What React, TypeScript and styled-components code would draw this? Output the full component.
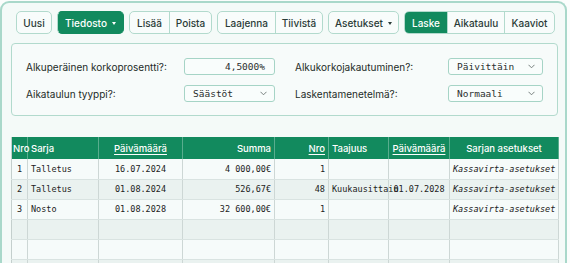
import React from 'react';
import styled, { createGlobalStyle, css } from 'styled-components';

const GREEN = '#128a5e';
const LINE = '#b2dacd';
const MONO = '"DejaVu Sans Mono", "Liberation Mono", monospace';

const GlobalStyle = createGlobalStyle`
  html, body {
    margin: 0;
    padding: 0;
    background: #fbfdfc;
    font-family: Inter, "Noto Sans", sans-serif;
    color: #1d2b28;
  }
`;

const Frame = styled.div`
  box-sizing: border-box;
  width: 567px;
  margin-top: 1px;
  min-height: 280px;
  border: 2px solid #a9d8ca;
  border-bottom: none;
  border-radius: 9px 9px 0 0;
  background: #f4faf8;
  padding: 8px 7px 0 9px;
`;

const Toolbar = styled.div`
  display: flex;
  gap: 5px;
  height: 23px;
  margin-left: 5px;
`;

const Group = styled.div`
  display: flex;
  border: 1px solid ${LINE};
  border-radius: 5px;
  background: #f8fcfb;
  overflow: hidden;
`;

const Button = styled.button<{ $active?: boolean; $w: number }>`
  box-sizing: border-box;
  display: flex;
  align-items: center;
  justify-content: center;
  gap: 5px;
  width: ${(p) => p.$w}px;
  height: 100%;
  padding: 0;
  border: none;
  background: transparent;
  font-family: Inter, sans-serif;
  font-size: 10px;
  font-weight: 500;
  color: #2a3b37;
  white-space: nowrap;
  & + & {
    border-left: 1px solid ${LINE};
  }
  ${(p) =>
    p.$active &&
    css`
      background: ${GREEN};
      color: #fff;
    `}
`;

const SoloButton = styled(Button)<{ $filled?: boolean }>`
  border: 1px solid ${(p) => (p.$filled ? GREEN : LINE)};
  border-radius: 5px;
  background: ${(p) => (p.$filled ? GREEN : '#f8fcfb')};
  color: ${(p) => (p.$filled ? '#fff' : '#2a3b37')};
`;

const Caret = styled.span`
  width: 0;
  height: 0;
  border-left: 2.5px solid transparent;
  border-right: 2.5px solid transparent;
  border-top: 3px solid currentColor;
  margin-top: 1px;
`;

const Panel = styled.div`
  box-sizing: border-box;
  margin-top: 9px;
  width: 547px;
  height: 73px;
  border: 1px solid ${LINE};
  border-radius: 4px;
  background: #f7fbfa;
  padding: 14px 14px 0 14px;
  display: grid;
  grid-template-columns: 249px 248px;
  column-gap: 20px;
  row-gap: 10px;
  grid-auto-rows: 17px;
`;

const Field = styled.div`
  display: flex;
  align-items: center;
  justify-content: space-between;
`;

const Label = styled.span`
  font-size: 10px;
  color: #1d2b28;
`;

const Control = styled.div<{ $width: number; $right?: boolean }>`
  box-sizing: border-box;
  width: ${(p) => p.$width}px;
  height: 17px;
  border: 1px solid #a6d4c6;
  border-radius: 3px;
  background: #f9fdfc;
  display: flex;
  align-items: center;
  justify-content: ${(p) => (p.$right ? 'flex-end' : 'space-between')};
  padding: ${(p) => (p.$right ? '0 9px 0 0' : '0 7px 0 8px')};
  font-family: ${MONO};
  font-size: 9.5px;
  color: #2b2f2e;
`;

const Chevron = () => (
  <svg width="7" height="5" viewBox="0 0 7 5">
    <polyline points="0.5,0.8 3.5,3.8 6.5,0.8" fill="none" stroke="#6b7472" strokeWidth="0.9" />
  </svg>
);

const Table = styled.table`
  margin-top: 21px;
  width: 547px;
  table-layout: fixed;
  border-collapse: collapse;
  border-left: 1px solid #c4cfcd;
`;

const Th = styled.th<{ $align?: string; $link?: boolean }>`
  height: 22px;
  padding: 0 3px;
  background: ${GREEN};
  color: #fff;
  font-family: Inter, sans-serif;
  font-size: 9.5px;
  font-weight: 500;
  text-align: ${(p) => p.$align || 'left'};
  white-space: nowrap;
  overflow: visible;
  border-right: 1px solid rgba(255, 255, 255, 0.3);
  text-decoration: ${(p) => (p.$link ? 'underline' : 'none')};
  text-underline-offset: 2px;
  &:first-child {
    padding: 0 1px;
  }
`;

const Tr = styled.tr`
  height: 20px;
  background: #f6fbfa;
  &:nth-child(even) {
    background: #eaf2f0;
  }
`;

const Td = styled.td<{ $align?: string; $italic?: boolean }>`
  padding: 0 3px;
  font-family: ${MONO};
  font-size: 8.5px;
  color: #222;
  white-space: nowrap;
  overflow: visible;
  text-align: ${(p) => p.$align || 'left'};
  font-style: ${(p) => (p.$italic ? 'italic' : 'normal')};
  border-right: 1px solid #cdd7d5;
  border-bottom: 1px solid #d9e3e1;
  &:first-child {
    padding-left: 5px;
  }
`;

const widths = [16, 71, 84, 92, 54, 60, 61, 109];

const rows = [
  ['1', 'Talletus', '16.07.2024', '4 000,00€', '1', '', '', 'Kassavirta-asetukset'],
  ['2', 'Talletus', '01.08.2024', '526,67€', '48', 'Kuukausittain', '01.07.2028', 'Kassavirta-asetukset'],
  ['3', 'Nosto', '01.08.2028', '32 600,00€', '1', '', '', 'Kassavirta-asetukset'],
  ['', '', '', '', '', '', '', ''],
  ['', '', '', '', '', '', '', ''],
  ['', '', '', '', '', '', '', ''],
];

const align = ['left', 'left', 'center', 'right', 'right', 'left', 'center', 'center'];

const App: React.FC = () => (
  <>
    <GlobalStyle />
    <Frame>
      <Toolbar>
        <SoloButton $w={36}>Uusi</SoloButton>
        <SoloButton $w={67} $filled>
          Tiedosto
          <Caret />
        </SoloButton>
        <Group>
          <Button $w={39}>Lisää</Button>
          <Button $w={42}>Poista</Button>
        </Group>
        <Group>
          <Button $w={57}>Laajenna</Button>
          <Button $w={47}>Tiivistä</Button>
        </Group>
        <SoloButton $w={71}>
          Asetukset
          <Caret />
        </SoloButton>
        <Group>
          <Button $w={42} $active>
            Laske
          </Button>
          <Button $w={57}>Aikataulu</Button>
          <Button $w={50}>Kaaviot</Button>
        </Group>
      </Toolbar>

      <Panel>
        <Field>
          <Label>Alkuperäinen korkoprosentti?:</Label>
          <Control $width={91} $right>
            4,5000%
          </Control>
        </Field>
        <Field>
          <Label>Alkukorkojakautuminen?:</Label>
          <Control $width={95}>
            Päivittäin <Chevron />
          </Control>
        </Field>
        <Field>
          <Label>Aikataulun tyyppi?:</Label>
          <Control $width={91}>
            Säästöt <Chevron />
          </Control>
        </Field>
        <Field>
          <Label>Laskentamenetelmä?:</Label>
          <Control $width={95}>
            Normaali <Chevron />
          </Control>
        </Field>
      </Panel>

      <Table>
        <colgroup>
          {widths.map((w, i) => (
            <col key={i} style={{ width: w }} />
          ))}
        </colgroup>
        <thead>
          <tr>
            <Th>Nro</Th>
            <Th>Sarja</Th>
            <Th $align="center" $link>
              Päivämäärä
            </Th>
            <Th $align="right">Summa</Th>
            <Th $align="right" $link>
              Nro
            </Th>
            <Th>Taajuus</Th>
            <Th $align="center" $link>
              Päivämäärä
            </Th>
            <Th $align="center">Sarjan asetukset</Th>
          </tr>
        </thead>
        <tbody>
          {rows.map((r, i) => (
            <Tr key={i}>
              {r.map((c, j) => (
                <Td key={j} $align={align[j]} $italic={j === 7}>
                  {c}
                </Td>
              ))}
            </Tr>
          ))}
        </tbody>
      </Table>
    </Frame>
  </>
);

export default App;
